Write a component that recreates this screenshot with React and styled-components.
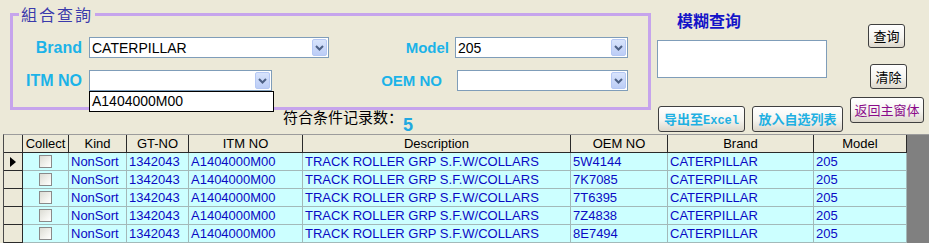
import styled, { createGlobalStyle } from "styled-components";

const GlobalStyle = createGlobalStyle`
  html, body {
    margin: 0;
    padding: 0;
    background: #ece9d8;
    overflow: hidden;
  }
  body {
    font-family: "Liberation Sans", Arial, "Noto Sans CJK SC", sans-serif;
  }
`;

const columns = [
  { title: "", w: 19 },
  { title: "Collect", w: 46 },
  { title: "Kind", w: 58 },
  { title: "GT-NO", w: 62 },
  { title: "ITM NO", w: 114 },
  { title: "Description", w: 268 },
  { title: "OEM NO", w: 97 },
  { title: "Brand", w: 146 },
  { title: "Model", w: 93 },
];

const oems = ["5W4144", "7K7085", "7T6395", "7Z4838", "8E7494"];

const ComboArrow = () => (
  <ArrowBtn>
    <svg width="9" height="6" viewBox="0 0 9 6">
      <path d="M1 1 L4.5 4.5 L8 1" fill="none" stroke="#4d6185" strokeWidth="2" />
    </svg>
  </ArrowBtn>
);

const App = () => {
  return (
    <>
      <GlobalStyle />
      <Top>
        <LeftCol>
          <Group>
            <Legend>組合查詢</Legend>
            <FieldRow>
              <Label $w={69} $mr={7}>Brand</Label>
              <Combo $w={240}>
                CATERPILLAR
                <ComboArrow />
              </Combo>
              <Label $w={120} $mr={6} $size={15}>Model</Label>
              <Combo $w={173}>
                205
                <ComboArrow />
              </Combo>
            </FieldRow>
            <FieldRow>
              <Label $w={69} $mr={7}>ITM NO</Label>
              <Combo $w={183}>
                <ComboArrow />
                <DropList>A1404000M00</DropList>
              </Combo>
              <Label $w={170} $mr={15} $size={15}>OEM NO</Label>
              <Combo $w={171}>
                <ComboArrow />
              </Combo>
            </FieldRow>
          </Group>
          <CountRow>
            <CountLabel>符合条件记录数：</CountLabel>
            <CountNum>5</CountNum>
          </CountRow>
        </LeftCol>

        <MidCol>
          <FuzzyTitle>模糊查询</FuzzyTitle>
          <FuzzyBox />
          <ButtonRow>
            <XpButton $w={87} $h={26} $color="#1fb0e2" $bold>
              导出至<Mono>Excel</Mono>
            </XpButton>
            <XpButton $w={91} $h={26} $color="#1fb0e2" $bold>
              放入自选列表
            </XpButton>
          </ButtonRow>
        </MidCol>

        <RightCol>
          <XpButton $w={37} $h={24} $mt={24} $ml={18}>查询</XpButton>
          <XpButton $w={37} $h={25} $mt={16} $ml={20}>清除</XpButton>
          <XpButton $w={74} $h={26} $mt={8} $color="#8a0a8a">返回主窗体</XpButton>
        </RightCol>
      </Top>

      <GridArea>
        <GridRow $cols={columns}>
          {columns.map((c, i) => (
            <HeadCell key={i}>{c.title}</HeadCell>
          ))}
        </GridRow>
        {oems.map((oem, i) => (
          <GridRow key={oem} $cols={columns}>
            <RowHead>
              {i === 0 && (
                <svg width="6" height="10" viewBox="0 0 6 10">
                  <polygon points="0,0 6,5 0,10" fill="#000" />
                </svg>
              )}
            </RowHead>
            <Cell $center>
              <Check />
            </Cell>
            <Cell>NonSort</Cell>
            <Cell>1342043</Cell>
            <Cell>A1404000M00</Cell>
            <Cell>TRACK ROLLER GRP S.F.W/COLLARS</Cell>
            <Cell>{oem}</Cell>
            <Cell>CATERPILLAR</Cell>
            <Cell>205</Cell>
          </GridRow>
        ))}
      </GridArea>
    </>
  );
};

export default App;

const Top = styled.div`
  display: flex;
  height: 134px;
  padding-left: 10px;
  box-sizing: border-box;
`;

const LeftCol = styled.div`
  width: 641px;
  display: flex;
  flex-direction: column;
`;

const Group = styled.fieldset`
  margin: 5px 0 0;
  padding: 14px 0 16px;
  border: 3px solid #c6a4ec;
  min-width: 0;
`;

const Legend = styled.legend`
  margin-left: 6px;
  padding: 0 2px;
  font-family: "Noto Sans CJK TC", "Noto Sans CJK SC", sans-serif;
  font-size: 16px;
  line-height: 18px;
  letter-spacing: 2px;
  color: #3a3aac;
`;

const FieldRow = styled.div`
  display: flex;
  align-items: center;
  height: 21px;
  & + & {
    margin-top: 12px;
  }
`;

const Label = styled.span`
  width: ${(p) => p.$w}px;
  margin-right: ${(p) => p.$mr}px;
  text-align: right;
  font-weight: bold;
  font-size: ${(p) => p.$size || 16}px;
  color: #1cb3e8;
  white-space: nowrap;
`;

const Combo = styled.div`
  position: relative;
  width: ${(p) => p.$w}px;
  height: 21px;
  box-sizing: border-box;
  border: 1px solid #7f9db9;
  background: #fff;
  display: flex;
  align-items: center;
  padding-left: 2px;
  font-size: 14px;
  color: #000;
`;

const ArrowBtn = styled.span`
  margin-left: auto;
  margin-right: 1px;
  width: 15px;
  height: 17px;
  box-sizing: border-box;
  border: 1px solid #b5c8f4;
  border-radius: 2px;
  background: linear-gradient(180deg, #d8e4fc 0%, #bccdf6 100%);
  display: flex;
  align-items: center;
  justify-content: center;
`;

const DropList = styled.div`
  position: absolute;
  left: -1px;
  top: 20px;
  width: 185px;
  height: 21px;
  box-sizing: border-box;
  border: 1px solid #000;
  background: #fff;
  padding-left: 2px;
  font-size: 14px;
  line-height: 19px;
  z-index: 2;
`;

const CountRow = styled.div`
  display: flex;
  align-items: flex-start;
  padding-left: 273px;
`;

const CountLabel = styled.span`
  margin-top: -1px;
  font-family: "Noto Sans CJK SC", sans-serif;
  font-size: 15px;
  line-height: 16px;
  color: #000;
`;

const CountNum = styled.span`
  margin-top: 7px;
  font-weight: bold;
  font-size: 18px;
  line-height: 16px;
  color: #22a8e0;
`;

const MidCol = styled.div`
  margin-left: 6px;
  width: 188px;
  display: flex;
  flex-direction: column;
`;

const FuzzyTitle = styled.div`
  margin-top: 12px;
  padding-left: 20px;
  font-family: "Noto Sans CJK SC", sans-serif;
  font-weight: bold;
  font-size: 16px;
  line-height: 17px;
  color: #1414c8;
`;

const FuzzyBox = styled.div`
  margin-top: 11px;
  width: 170px;
  height: 38px;
  box-sizing: border-box;
  border: 1px solid #7f9db9;
  background: #fff;
`;

const ButtonRow = styled.div`
  margin-top: 28px;
  padding-left: 1px;
  display: flex;
  gap: 7px;
`;

const RightCol = styled.div`
  margin-left: 5px;
  display: flex;
  flex-direction: column;
  align-items: flex-start;
`;

const XpButton = styled.button`
  display: block;
  width: ${(p) => p.$w}px;
  height: ${(p) => p.$h}px;
  margin: ${(p) => p.$mt || 0}px 0 0 ${(p) => p.$ml || 0}px;
  padding: 0;
  box-sizing: border-box;
  border: 1px solid #3f3f3f;
  border-radius: 3px;
  background: linear-gradient(180deg, #ffffff 0%, #f5f4ef 55%, #dcd7cb 100%);
  font-family: "Noto Sans CJK SC", sans-serif;
  font-size: 13px;
  line-height: ${(p) => p.$h - 2}px;
  font-weight: ${(p) => (p.$bold ? "bold" : "normal")};
  color: ${(p) => p.$color || "#000"};
  text-align: center;
  white-space: nowrap;
`;

const Mono = styled.span`
  font-family: "Liberation Mono", "Courier New", monospace;
  font-size: 12px;
  font-weight: bold;
  vertical-align: baseline;
`;

const GridArea = styled.div`
  margin-left: 3px;
  height: 109px;
  box-sizing: border-box;
  border-top: 1px solid #9c9c9c;
  border-left: 1px solid #4a4a4a;
  background: #808080;
  overflow: hidden;
`;

const GridRow = styled.div`
  display: grid;
  grid-template-columns: ${(p) => p.$cols.map((c) => c.w + "px").join(" ")};
  height: 18px;
`;

const HeadCell = styled.div`
  box-sizing: border-box;
  background: #ece9d8;
  border-right: 1px solid #2a2a2a;
  border-bottom: 1px solid #2a2a2a;
  font-size: 13px;
  line-height: 17px;
  text-align: center;
  color: #000;
  white-space: nowrap;
  overflow: hidden;
`;

const RowHead = styled.div`
  box-sizing: border-box;
  background: #ece9d8;
  border-right: 1px solid #2a2a2a;
  border-bottom: 1px solid #2a2a2a;
  display: flex;
  align-items: center;
  padding-left: 6px;
`;

const Cell = styled.div`
  box-sizing: border-box;
  background: #ccffff;
  border-right: 1px solid #a3b9b9;
  border-bottom: 1px solid #a3b9b9;
  padding-left: ${(p) => (p.$center ? 0 : 2)}px;
  display: flex;
  align-items: center;
  justify-content: ${(p) => (p.$center ? "center" : "flex-start")};
  font-size: 13px;
  color: #0a0ac4;
  white-space: nowrap;
  overflow: hidden;
`;

const Check = styled.span`
  width: 13px;
  height: 13px;
  box-sizing: border-box;
  border: 1px solid #8a8a8a;
  background: linear-gradient(135deg, #dcdcd4 0%, #f6f6f2 70%, #ffffff 100%);
`;
